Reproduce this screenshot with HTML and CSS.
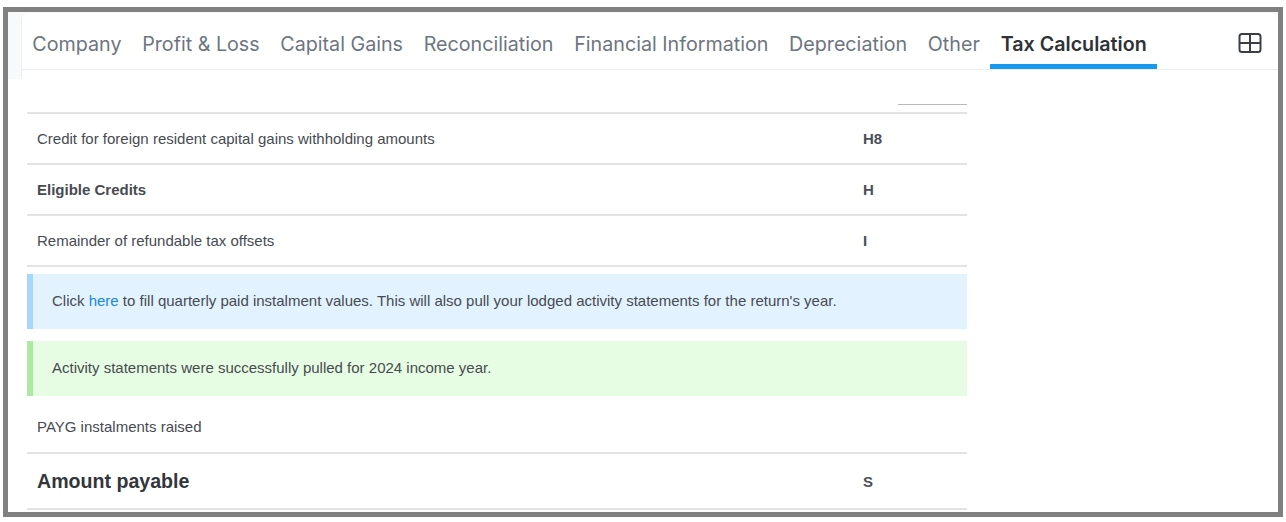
FILE: index.html
```html
<!DOCTYPE html>
<html lang="en">
<head>
<meta charset="utf-8">
<title>Tax Calculation</title>
<link rel="stylesheet" href="styles.css">
</head>
<body>
<div class="frame">
  <div class="shell">
    <div class="card">
      <nav class="tabs">
        <a class="tab">Company</a>
        <a class="tab">Profit &amp; Loss</a>
        <a class="tab">Capital Gains</a>
        <a class="tab">Reconciliation</a>
        <a class="tab">Financial Information</a>
        <a class="tab">Depreciation</a>
        <a class="tab">Other</a>
        <a class="tab active">Tax Calculation</a>
        <svg class="grid-icon" width="24" height="22" viewBox="0 0 24 22" fill="none" stroke="#3a3f45" stroke-width="2"><rect x="1.5" y="2" width="21" height="18" rx="2.5"/><path d="M1.5 11h21M12 2v18"/></svg>
      </nav>
      <main class="content">
        <div class="head-row"><span class="head-cell"></span></div>
        <div class="row"><span class="label">Credit for foreign resident capital gains withholding amounts</span><span class="code">H8</span></div>
        <div class="row"><span class="label strong">Eligible Credits</span><span class="code">H</span></div>
        <div class="row"><span class="label">Remainder of refundable tax offsets</span><span class="code">I</span></div>
        <div class="notice info">Click <a class="link">here</a> to fill quarterly paid instalment values. This will also pull your lodged activity statements for the return's year.</div>
        <div class="notice success">Activity statements were successfully pulled for 2024 income year.</div>
        <div class="row plain"><span class="label">PAYG instalments raised</span></div>
        <div class="row total"><span class="label big">Amount payable</span><span class="code">S</span></div>
      </main>
    </div>
  </div>
</div>
</body>
</html>
```
FILE: styles.css
```css
* { box-sizing: border-box; }
html, body { margin: 0; padding: 0; background: #fff; }
body { padding: 7px 0 0 3px; overflow: hidden; }
.frame {
  width: 1280px;
  height: 510px;
  border: 5px solid #808080;
  background: #fff;
  overflow: hidden;
}
.shell {
  height: 100%;
  padding: 1px 0 0 13px;
  background: linear-gradient(#f8f9fb 67px, #fff 67px);
}
.card {
  height: 100%;
  background: linear-gradient(#eceef0, #eceef0) left top / 1px 66px no-repeat, #fff;
  border-top-left-radius: 8px;
  border-top-right-radius: 8px;
}
.tabs {
  display: flex;
  align-items: stretch;
  height: 57px;
  padding-left: 1px;
  border-bottom: 1px solid #eceef0;
  font: 400 19.7px "Inter", sans-serif;
  color: #6d7580;
}
.tab {
  padding: 16px 10.35px 0;
  line-height: 30px;
  white-space: nowrap;
}
.active {
  height: 56px;
  padding-left: 10.5px;
  padding-right: 10px;
  font-weight: 600;
  color: #2f3237;
  border-bottom: 5px solid #1a98ef;
}
.grid-icon { margin: 19px 16px 0 auto; }
.content {
  width: 940px;
  margin-left: 6px;
  font: 15px "Liberation Sans", sans-serif;
  color: #474b51;
}
.head-row {
  height: 44px;
  display: flex;
  justify-content: flex-end;
  border-bottom: 2px solid #e3e3e3;
}
.head-cell {
  width: 69px;
  height: 35px;
  border-bottom: 1px solid #b9b9b9;
}
.row {
  display: flex;
  align-items: center;
  height: 51px;
  padding-left: 10px;
  border-bottom: 2px solid #e3e3e3;
}
.label { width: 826px; }
.strong { font-weight: 700; }
.code { font-weight: 700; color: #4a5059; }
.notice {
  height: 55px;
  padding-left: 19px;
  line-height: 54px;
  border-left: 6px solid;
}
.info { margin-top: 7px; background: #e2f3ff; border-left-color: #a6d8fd; }
.success { margin-top: 12px; background: #e6fde3; border-left-color: #aee8a5; }
.link { color: #1a86e0; }
.plain { height: 58px; padding-top: 4px; }
.total { height: 56px; }
.big { font-size: 19.6px; font-weight: 700; color: #33363b; }
```
